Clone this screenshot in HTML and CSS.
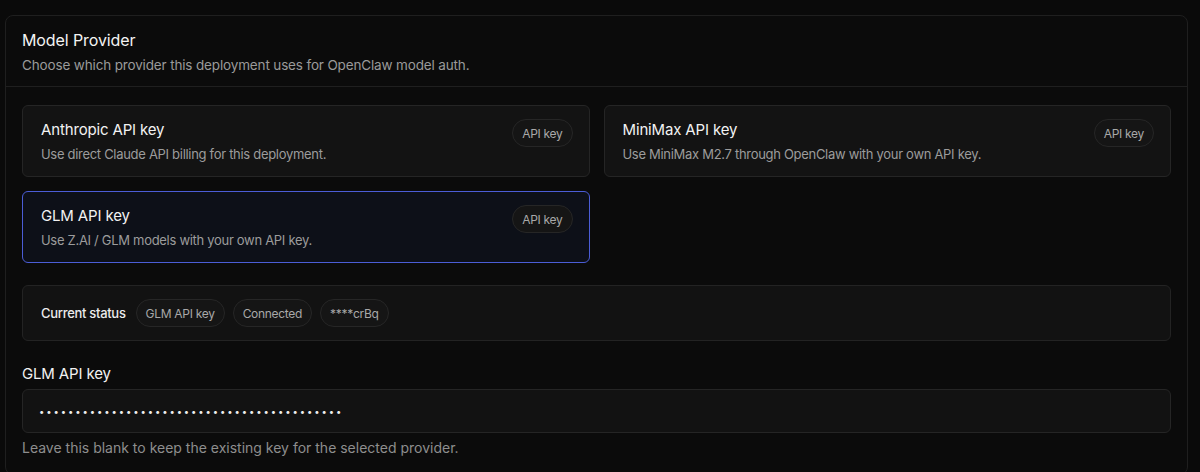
FILE: index.html
```html
<!DOCTYPE html>
<html lang="en">
<head>
<meta charset="utf-8">
<title>Model Provider</title>
<link rel="stylesheet" href="styles.css">
</head>
<body>
<section class="panel">
  <header class="panel-head">
    <h2 class="panel-title">Model Provider</h2>
    <p class="panel-sub">Choose which provider this deployment uses for OpenClaw model auth.</p>
  </header>
  <div class="panel-body">
    <div class="providers">
      <div class="provider">
        <div class="provider-text">
          <div class="provider-name">Anthropic API key</div>
          <div class="provider-desc">Use direct Claude API billing for this deployment.</div>
        </div>
        <span class="pill">API key</span>
      </div>
      <div class="provider">
        <div class="provider-text">
          <div class="provider-name">MiniMax API key</div>
          <div class="provider-desc">Use MiniMax M2.7 through OpenClaw with your own API key.</div>
        </div>
        <span class="pill">API key</span>
      </div>
      <div class="provider selected">
        <div class="provider-text">
          <div class="provider-name">GLM API key</div>
          <div class="provider-desc">Use Z.AI / GLM models with your own API key.</div>
        </div>
        <span class="pill">API key</span>
      </div>
    </div>

    <div class="status">
      <span class="status-label">Current status</span>
      <span class="pill">GLM API key</span>
      <span class="pill">Connected</span>
      <span class="pill">****crBq</span>
    </div>

    <div class="field">
      <label class="field-label" for="key">GLM API key</label>
      <input class="field-input" id="key" type="password" value="ABCDEFGHIJKLMNOPQRSTUVWXYZabcdefghijklmnop">
      <p class="field-help">Leave this blank to keep the existing key for the selected provider.</p>
    </div>
  </div>
</section>
</body>
</html>
```
FILE: styles.css
```css
* { box-sizing: border-box; }
html, body { margin: 0; padding: 0; }
body {
  background: #0a0a0a;
  font-family: Inter, "Noto Sans", sans-serif;
  color: #f2f2f2;
  padding: 15px 12px 0 5px;
  height: 472px;
  overflow: hidden;
}
.panel {
  background: #0b0b0b;
  border: 1px solid #1f1f1f;
  border-radius: 8px;
}
.panel-head {
  padding: 12px 16px 11px;
  border-bottom: 1px solid #1f1f1f;
}
.panel-title {
  margin: 0;
  font-size: 16px;
  line-height: 24px;
  font-weight: 400;
  letter-spacing: -0.1px;
  color: #f4f4f4;
}
.panel-sub {
  margin: 3px 0 0;
  font-size: 13.5px;
  line-height: 20px;
  color: #9a9a9a;
  letter-spacing: -0.15px;
}
.panel-body {
  padding: 18px 16px 16px;
}
.providers {
  display: grid;
  grid-template-columns: 1fr 1fr;
  gap: 14px;
}
.provider {
  display: flex;
  justify-content: space-between;
  align-items: flex-start;
  background: #131313;
  border: 1px solid #252525;
  border-radius: 6px;
  padding: 13px 16px 12px 18px;
  height: 72px;
}
.provider.selected {
  background: #0d1018;
  border-color: #4b5dd6;
}
.provider-name {
  font-size: 15px;
  line-height: 22px;
  font-weight: 400;
  letter-spacing: -0.15px;
  color: #f2f2f2;
}
.provider-desc {
  margin-top: 3px;
  font-size: 13px;
  line-height: 20px;
  color: #9c9c9c;
  letter-spacing: -0.3px;
}
.pill {
  display: inline-flex;
  align-items: center;
  height: 28px;
  padding: 0 9px;
  border: 1px solid #262626;
  border-radius: 14px;
  background: #151515;
  font-size: 12px;
  letter-spacing: -0.3px;
  color: #a8a8a8;
  white-space: nowrap;
}
.provider .pill { flex: none; }
.status {
  margin-top: 22px;
  display: flex;
  align-items: center;
  gap: 8px;
  height: 56px;
  padding: 0 18px;
  background: #121212;
  border: 1px solid #232323;
  border-radius: 6px;
}
.status-label {
  font-size: 13px;
  font-weight: 500;
  letter-spacing: -0.3px;
  color: #ececec;
  margin-right: 2px;
}
.field { margin-top: 22px; }
.field-label {
  display: block;
  font-size: 15px;
  line-height: 22px;
  font-weight: 400;
  letter-spacing: -0.15px;
  color: #f2f2f2;
}
.field-input {
  display: block;
  width: 100%;
  height: 44px;
  margin-top: 4px;
  padding: 0 16px;
  background: #121212;
  border: 1px solid #252525;
  border-radius: 6px;
  color: #ededed;
  font-family: Inter, sans-serif;
  font-size: 9.5px;
  letter-spacing: 1.9px;
  outline: none;
}
.field-help {
  margin: 5px 0 0;
  font-size: 14px;
  line-height: 20px;
  color: #8e8e8e;
  letter-spacing: 0;
}
```
